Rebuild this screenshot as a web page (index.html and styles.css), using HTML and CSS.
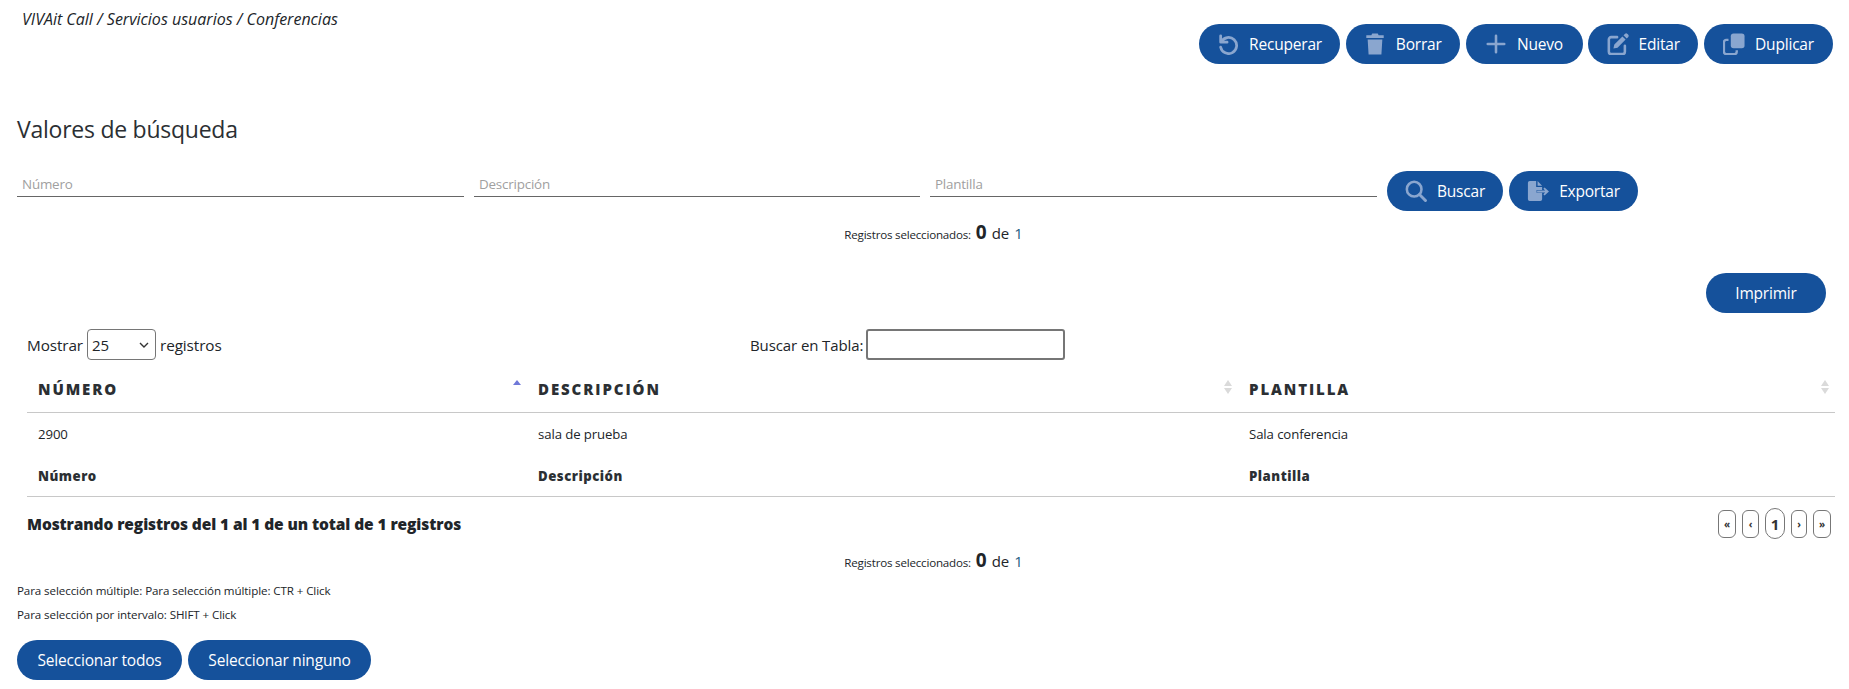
FILE: index.html
```html
<!DOCTYPE html>
<html lang="es">
<head>
<meta charset="utf-8">
<title>Conferencias</title>
<link rel="stylesheet" href="styles.css">
</head>
<body>
<header class="top">
  <div class="crumbs">VIVAit Call / Servicios usuarios / Conferencias</div>
  <nav class="actions">
    <button class="btn w-rec"><svg class="ic" viewBox="0 0 24 24"><path d="M4 3v7h7M4.800 9.600A8.800 8.800 0 1 1 4 15.500" fill="none" stroke="currentColor" stroke-width="3" stroke-linecap="round" stroke-linejoin="round"/></svg><span>Recuperar</span></button>
    <button class="btn w-bor"><svg class="ic" viewBox="0 0 24 24"><path d="M9 .5h6l1 2h5.500v3h-19v-3H8zM4 7h16l-1 16.500H5z" fill="currentColor"/></svg><span>Borrar</span></button>
    <button class="btn w-nue"><svg class="ic" viewBox="0 0 24 24"><path d="M12 3v18M3 12h18" fill="none" stroke="currentColor" stroke-width="2.800" stroke-linecap="round"/></svg><span>Nuevo</span></button>
    <button class="btn w-edi"><svg class="ic" viewBox="0 0 24 24"><path d="M11 4.500H4.500A2.500 2.500 0 0 0 2 7v13.500A2.500 2.500 0 0 0 4.500 23H17a2.500 2.500 0 0 0 2.500-2.500V14" fill="none" stroke="currentColor" stroke-width="2.800" stroke-linecap="round"/><path d="M19.500 1a2 2 0 0 1 2.800 0l.7.7a2 2 0 0 1 0 2.800l-1.500 1.500-3.500-3.500zM16.800 3.700l3.500 3.500-8.800 8.800-4.500 1 1-4.500z" fill="currentColor"/></svg><span>Editar</span></button>
    <button class="btn w-dup"><svg class="ic" viewBox="0 0 24 24"><rect x="8.500" y=".5" width="15" height="16" rx="3" fill="currentColor"/><path d="M6 7.500H3.500A2.500 2.500 0 0 0 1 10v10.500A2.500 2.500 0 0 0 3.500 23h9a2.500 2.500 0 0 0 2.500-2.500v-1.800" fill="none" stroke="currentColor" stroke-width="2.600"/></svg><span>Duplicar</span></button>
  </nav>
</header>

<h1 class="title">Valores de búsqueda</h1>

<section class="search">
  <input class="field" placeholder="Número">
  <input class="field" placeholder="Descripción">
  <input class="field" placeholder="Plantilla">
  <div class="search-btns">
    <button class="btn w-bus"><svg class="ic" viewBox="0 0 24 24"><circle cx="10" cy="10" r="8" fill="none" stroke="currentColor" stroke-width="2.800"/><path d="M15.800 15.800l6.500 6.500" stroke="currentColor" stroke-width="3.200" stroke-linecap="round"/></svg><span>Buscar</span></button>
    <button class="btn w-exp"><svg class="ic" viewBox="0 0 24 24"><path d="M1 3a2 2 0 0 1 2-2h7v6.500h6.500V11h-6v3h6v7a2 2 0 0 1-2 2H3a2 2 0 0 1-2-2z" fill="currentColor"/><path d="M11.500 1.200l5 5h-5z" fill="currentColor"/><path d="M11 12.500h11.500M18.500 8.800l4 3.700-4 3.700" fill="none" stroke="currentColor" stroke-width="2"/></svg><span>Exportar</span></button>
  </div>
</section>

<p class="selected sel-a"><small>Registros seleccionados:</small> <b>0</b> de <span class="link">1</span></p>

<div class="print-row"><button class="btn w-imp"><span>Imprimir</span></button></div>

<section class="dt">
  <div class="dt-controls">
    <label class="len">Mostrar <select class="sel"><option>25</option><option>50</option></select> registros</label>
    <label class="filter">Buscar en Tabla: <input class="filter-in"></label>
  </div>
  <table class="tbl">
    <colgroup><col class="c1"><col class="c2"><col class="c3"></colgroup>
    <thead>
      <tr>
        <th><div class="th"><span>Número</span><svg class="sort" viewBox="0 0 10 16"><path d="M5 1l4 5H1z" fill="#6f78d8"/></svg></div></th>
        <th><div class="th"><span>Descripción</span><svg class="sort" viewBox="0 0 10 16"><path d="M5 1l4 6H1z" fill="#dadada"/><path d="M5 15l4-6H1z" fill="#dadada"/></svg></div></th>
        <th><div class="th"><span>Plantilla</span><svg class="sort" viewBox="0 0 10 16"><path d="M5 1l4 6H1z" fill="#dadada"/><path d="M5 15l4-6H1z" fill="#dadada"/></svg></div></th>
      </tr>
    </thead>
    <tbody>
      <tr><td>2900</td><td>sala de prueba</td><td>Sala conferencia</td></tr>
    </tbody>
    <tfoot>
      <tr><th>Número</th><th>Descripción</th><th>Plantilla</th></tr>
    </tfoot>
  </table>
  <div class="dt-foot">
    <div class="info">Mostrando registros del 1 al 1 de un total de 1 registros</div>
    <div class="pager">
      <a class="pg p18">«</a><a class="pg p17">‹</a><a class="pg cur">1</a><a class="pg p16">›</a><a class="pg p18">»</a>
    </div>
  </div>
</section>

<p class="selected sel-b"><small>Registros seleccionados:</small> <b>0</b> de <span class="link">1</span></p>

<p class="note note-a">Para selección múltiple: Para selección múltiple: CTR + Click</p>
<p class="note note-b">Para selección por intervalo: SHIFT + Click</p>

<div class="bottom">
  <button class="btn w-tod"><span>Seleccionar todos</span></button>
  <button class="btn w-nin"><span>Seleccionar ninguno</span></button>
</div>
</body>
</html>
```
FILE: styles.css
```css
* { box-sizing: border-box; }
html, body { margin: 0; padding: 0; }
body {
  font-family: "Open Sans", "Noto Sans", sans-serif;
  color: #212529;
  background: #fff;
  font-size: 14px;
  height: 689px;
  overflow: hidden;
}
.top { display: flex; justify-content: space-between; align-items: flex-start; padding: 0 16px 0 22px; height: 100px; }
.crumbs { font-style: italic; font-size: 16px; line-height: 20px; padding-top: 9px; }
.actions { display: flex; gap: 5.750px; padding-top: 24px; }
.btn {
  display: inline-flex; align-items: center; justify-content: center; gap: 10px;
  height: 40px; padding: 0; border: 0; border-radius: 20px;
  background: #15519b; color: #fff;
  font: 15.500px/20px "Open Sans", "Noto Sans", sans-serif;
  letter-spacing: -0.2px;
}
.ic { width: 22px; height: 22px; color: #8aa6cf; flex: none; }
.w-rec { width: 141px; }
.w-bor { width: 114px; }
.w-nue { width: 117px; }
.w-edi { width: 110px; }
.w-dup { width: 129px; }
.w-bus { width: 116px; }
.w-exp { width: 129px; }
.w-imp { width: 120px; }
.w-tod { width: 165px; }
.w-nin { width: 183px; }
.title { margin: 14px 0 0 17px; font-weight: 400; font-size: 23px; line-height: 30px; letter-spacing: -0.25px; color: #2b2f33; }
.search { display: grid; grid-template-columns: 447px 446px 447px auto; column-gap: 10px; padding: 0 0 0 17px; margin-top: 27px; align-items: start; }
.field {
  height: 26px; border: 0; border-bottom: 1px solid #666; outline: 0;
  padding: 0 5px; font: 13.400px/20px "Open Sans", sans-serif; letter-spacing: -0.2px;
  background: transparent;
}
.field::placeholder { color: #a0a0a0; opacity: 1; }
.search-btns { display: flex; gap: 6px; }
.selected { margin: 0; padding-left: 18px; text-align: center; line-height: 24px; font-size: 15px; }
.selected small { font-size: 11.600px; letter-spacing: -0.2px; }
.selected b { font-size: 19px; padding: 0 1px; }
.link { color: #1d5c80; padding-left: 1px; }
.sel-a { margin-top: 9px; }
.sel-b { margin-top: -3px; }
.print-row { display: flex; justify-content: flex-end; padding-right: 23px; margin-top: 26px; }
.dt { margin: 16px 14px 0 27px; }
.dt-controls { display: grid; grid-template-columns: 723px auto; height: 31px; align-items: center; font-size: 15px; letter-spacing: -0.1px; }
.len { display: flex; align-items: center; gap: 4px; font-size: 15.300px; }
.filter { display: flex; align-items: center; gap: 3px; }
.sel {
  appearance: none; width: 69px; height: 31px; border: 1px solid #767676; border-radius: 4px;
  background: #fff url("data:image/svg+xml,%3Csvg xmlns='http://www.w3.org/2000/svg' width='10' height='6'%3E%3Cpath d='M1 1l4 4 4-4' fill='none' stroke='%23333' stroke-width='1.400'/%3E%3C/svg%3E") no-repeat right 6px center;
  font: 15px "Open Sans", sans-serif; padding: 0 4px; color: #212529;
}
.filter-in { width: 199px; height: 31px; border: 2px solid #767676; border-radius: 3px; outline: 0; }
.tbl { width: 1808px; table-layout: fixed; border-collapse: collapse; margin-top: 3px; }
.c1 { width: 500px; } .c2 { width: 711px; } .c3 { width: 597px; }
.tbl thead th { height: 49px; border-bottom: 1px solid #c8c8c8; padding: 4px 11px 0; text-align: left; font-size: 15px; font-weight: 800; letter-spacing: 1.900px; text-transform: uppercase; color: #2b2f33; }
.th { display: flex; justify-content: space-between; align-items: center; }
.sort { width: 10px; height: 16px; flex: none; margin-right: -6px; margin-top: -5px; }
.tbl td { height: 44px; padding: 0 11px; font-size: 13.200px; letter-spacing: -0.1px; }
.tbl tfoot th { height: 40px; padding: 0 11px; text-align: left; font-size: 13.200px; font-weight: 800; letter-spacing: .5px; border-bottom: 1px solid #c8c8c8; color: #2b2f33; }
.dt-foot { display: flex; justify-content: space-between; align-items: center; height: 54px; }
.info { font-size: 15.500px; font-weight: 800; letter-spacing: -0.1px; }
.pager { display: flex; align-items: center; gap: 6px; margin-right: 4px; }
.pg { display: flex; align-items: center; justify-content: center; height: 28px; border: 1px solid #777; border-radius: 6px; font-size: 10px; color: #333; font-weight: 700; }
.p18 { width: 18px; } .p17 { width: 17px; } .p16 { width: 16px; }
.pg.cur { width: 20px; height: 31px; border-radius: 10px; font-size: 15px; }
.note { margin: 0 0 0 17px; font-size: 11.600px; line-height: 24px; letter-spacing: -0.1px; }
.note-a { margin-top: 4px; }
.bottom { display: flex; gap: 6px; padding-left: 17px; margin-top: 13px; }
```
